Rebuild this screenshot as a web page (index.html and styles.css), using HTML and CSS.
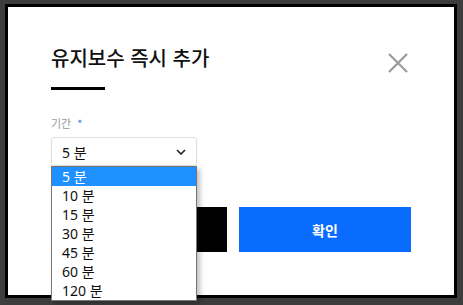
FILE: index.html
```html
<!doctype html>
<html lang="ko">
<head>
	<meta charset="utf-8">
	<title>유지보수 즉시 추가</title>
	<link rel="stylesheet" href="styles.css">
</head>
<body>
	<div class="dialog">
		<div class="dialog-head">
			<h2 class="dialog-title">유지보수 즉시 추가</h2>
			<button class="close-btn" type="button" aria-label="닫기">
				<svg viewBox="0 0 24 24" width="24" height="24">
					<path d="M3 3L21 21M21 3L3 21" stroke="#9a9a9a" stroke-width="2.2" fill="none"></path>
				</svg>
			</button>
		</div>
		<div class="title-bar"></div>

		<div class="field">
			<label class="field-label">기간 <span class="required">*</span></label>
			<div class="select">
				<span class="select-value">5 분</span>
				<svg class="chevron" viewBox="0 0 10 6" width="10" height="6">
					<path d="M1 1L5 5L9 1" stroke="#222" stroke-width="1.6" fill="none"></path>
				</svg>
			</div>
			<ul class="options">
				<li class="option selected">5 분</li>
				<li class="option">10 분</li>
				<li class="option">15 분</li>
				<li class="option">30 분</li>
				<li class="option">45 분</li>
				<li class="option">60 분</li>
				<li class="option">120 분</li>
			</ul>
		</div>

		<div class="actions">
			<button class="btn btn-cancel" type="button">취소</button>
			<button class="btn btn-ok" type="button">확인</button>
		</div>
	</div>
</body>
</html>
```

FILE: styles.css
```css
body {
	margin: 0;
	padding: 4px 6px 7px 5px;
	background-color: #3d3d3d;
	font-family: "Noto Sans", "Noto Sans CJK KR", sans-serif;
}

.dialog {
	box-sizing: border-box;
	width: 452px;
	height: 294px;
	border: 3px solid #000;
	background-color: #fff;
	padding: 36px 43px 0 43px;
}

.dialog-head {
	display: flex;
	justify-content: space-between;
	align-items: flex-start;
}

.dialog-title {
	margin: 0;
	font-family: "Noto Sans CJK KR", sans-serif;
	font-size: 20px;
	font-weight: 500;
	line-height: 30px;
	color: #111;
}

.close-btn {
	border: 0;
	padding: 0;
	margin: 8px 1px 0 0;
	background: none;
	width: 24px;
	height: 24px;
	cursor: pointer;
}

.title-bar {
	width: 54px;
	height: 3px;
	margin-top: 12px;
	background-color: #000;
}

.field {
	position: relative;
	width: 146px;
	margin-top: 25px;
}

.field-label {
	display: block;
	font-family: "Noto Sans CJK KR", sans-serif;
	font-size: 11px;
	line-height: 16px;
	color: #999;
	margin-bottom: 6px;
}

.required {
	color: #2f7bf5;
	margin-left: 3px;
}

.select {
	box-sizing: border-box;
	height: 29px;
	display: flex;
	align-items: center;
	justify-content: space-between;
	padding: 0 10px 0 10px;
	border: 1px solid #dedede;
	border-radius: 3px;
	box-shadow: 0 1px 2px rgba(0, 0, 0, 0.06);
	font-size: 14px;
	color: #111;
}

.options {
	position: absolute;
	top: 100%;
	left: 0;
	width: 146px;
	box-sizing: border-box;
	margin: 0;
	padding: 0;
	list-style: none;
	background-color: #fff;
	border: 1px solid #767676;
	box-shadow: 3px 3px 5px rgba(0, 0, 0, 0.25);
	z-index: 2;
}

.option {
	height: 19px;
	line-height: 19px;
	padding-left: 10px;
	font-size: 14px;
	color: #111;
}

.option.selected {
	background-color: #1e90ff;
	color: #fff;
}

.actions {
	display: flex;
	justify-content: flex-end;
	gap: 12px;
	margin-top: 41px;
}

.btn {
	width: 172px;
	height: 45px;
	border: 0;
	font-family: "Noto Sans CJK KR", sans-serif;
	font-size: 14px;
	font-weight: 700;
	color: #fff;
}

.btn-cancel {
	background-color: #000;
}

.btn-ok {
	background-color: #0a6cff;
}
```
